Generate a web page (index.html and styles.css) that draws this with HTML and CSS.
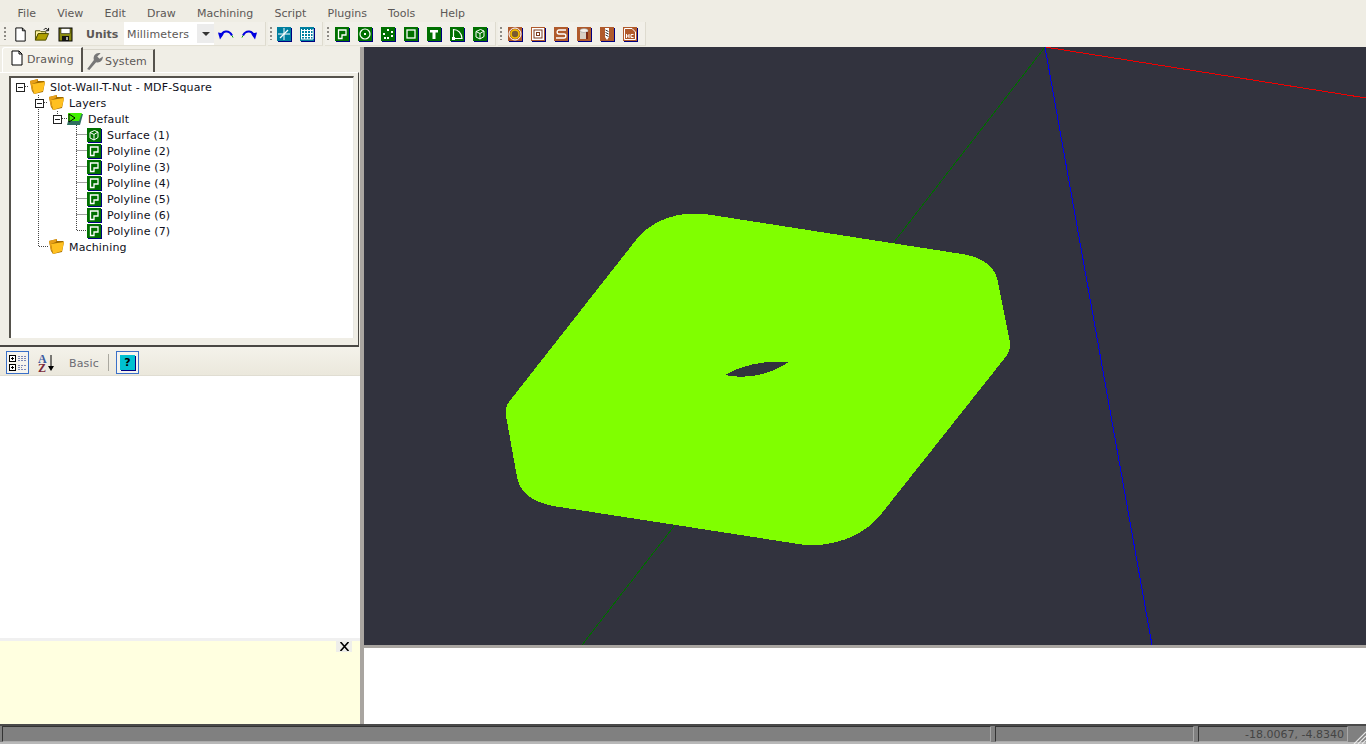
FILE: index.html
```html
<!DOCTYPE html>
<html lang="en">
<head>
<meta charset="utf-8">
<title>HeeksCAD</title>
<link rel="stylesheet" href="styles.css">
</head>
<body>
<svg class="defs" width="0" height="0" aria-hidden="true">
  <defs>
    <symbol id="i-poly" viewBox="0 0 15 15"><rect x="1" y="1" width="14" height="14" fill="#000080"/><rect width="14" height="14" fill="#007000"/><path d="M3.5 3H11V8H7V11.500H3.500Z" fill="none" stroke="#fff" stroke-width="1.300"/></symbol>
    <symbol id="i-circle" viewBox="0 0 15 15"><rect x="1" y="1" width="14" height="14" fill="#000080"/><rect width="14" height="14" fill="#007000"/><circle cx="7" cy="7" r="5" fill="none" stroke="#fff" stroke-width="1.200"/><rect x="6" y="6" width="2" height="2" fill="#fff"/></symbol>
    <symbol id="i-points" viewBox="0 0 15 15"><rect x="1" y="1" width="14" height="14" fill="#000080"/><rect width="14" height="14" fill="#007000"/><g fill="#fff"><rect x="6" y="2" width="2" height="2"/><rect x="10" y="4" width="2" height="2"/><rect x="2" y="6" width="2" height="2"/><rect x="10" y="8" width="2" height="2"/><rect x="6" y="10" width="2" height="2"/><rect x="3" y="10" width="2" height="2"/></g></symbol>
    <symbol id="i-rect" viewBox="0 0 15 15"><rect x="1" y="1" width="14" height="14" fill="#000080"/><rect width="14" height="14" fill="#007000"/><rect x="3" y="3" width="8" height="8" fill="none" stroke="#fff" stroke-width="1.300"/></symbol>
    <symbol id="i-text" viewBox="0 0 15 15"><rect x="1" y="1" width="14" height="14" fill="#000080"/><rect width="14" height="14" fill="#007000"/><path d="M3 3H11V5.500H8.500V12H5.500V5.500H3Z" fill="#fff"/></symbol>
    <symbol id="i-arc" viewBox="0 0 15 15"><rect x="1" y="1" width="14" height="14" fill="#000080"/><rect width="14" height="14" fill="#007000"/><path d="M3.500 11.500V2.500C8 2.500 11.500 6 12 11.500Z" fill="none" stroke="#fff" stroke-width="1.200"/><rect x="2" y="10" width="3" height="3" fill="#fff"/></symbol>
    <symbol id="i-solid" viewBox="0 0 15 15"><rect x="1" y="1" width="14" height="14" fill="#000080"/><rect width="14" height="14" fill="#007000"/><path d="M3 4.500L7.500 2.500L11 4V9.500L7 12L3 10ZM3 4.500L7 6.500L11 4M7 6.500V12" fill="none" stroke="#fff"/></symbol>
    <symbol id="i-m1" viewBox="0 0 15 15"><rect x="1" y="1" width="14" height="14" fill="#000080"/><rect width="14" height="14" fill="#b05a2c"/><circle cx="7" cy="7" r="6" fill="none" stroke="#fff" stroke-width="1"/><circle cx="7" cy="7" r="4" fill="#7a5a30" stroke="#f2c400" stroke-width="1.600"/></symbol>
    <symbol id="i-m2" viewBox="0 0 15 15"><rect x="1" y="1" width="14" height="14" fill="#000080"/><rect width="14" height="14" fill="#b05a2c"/><rect x="1" y="1" width="12" height="12" fill="#fff"/><rect x="2.500" y="2.500" width="9" height="9" fill="#7a3a1e"/><rect x="3.500" y="3.500" width="7" height="7" fill="#fff"/><rect x="5" y="5" width="4" height="4" fill="#7a3a1e"/><rect x="6" y="6" width="2" height="2" fill="#fff"/></symbol>
    <symbol id="i-m3" viewBox="0 0 15 15"><rect x="1" y="1" width="14" height="14" fill="#000080"/><rect width="14" height="14" fill="#b05a2c"/><path d="M12 3H5C2.500 3 2.500 7 5 7H10C12.500 7 12.500 11 10 11H2" fill="none" stroke="#fff" stroke-width="1.300"/></symbol>
    <symbol id="i-m4" viewBox="0 0 15 15"><rect x="1" y="1" width="14" height="14" fill="#000080"/><rect width="14" height="14" fill="#b05a2c"/><rect x="3" y="3" width="8" height="9" fill="#d8cfc4"/><ellipse cx="7" cy="3.500" rx="4" ry="2" fill="#f4f0ea" stroke="#888" stroke-width=".5"/><rect x="9" y="5" width="2" height="7" fill="#7a2a16"/></symbol>
    <symbol id="i-m5" viewBox="0 0 15 15"><rect x="1" y="1" width="14" height="14" fill="#000080"/><rect width="14" height="14" fill="#b05a2c"/><path d="M5 1H9V10L7 13L5 10Z" fill="#fff"/><path d="M5.500 3L8.500 4.500M5.500 5.500L8.500 7M5.500 8L8.500 9.500" stroke="#333" fill="none"/></symbol>
    <symbol id="i-m6" viewBox="0 0 15 15"><rect x="1" y="1" width="14" height="14" fill="#000080"/><rect width="14" height="14" fill="#b05a2c"/><path d="M1.500 1.500H9L12.500 5V12.500H1.500Z" fill="none" stroke="#fff"/><path d="M3.500 7V11M6 7V11M3.500 9H6M10.500 7.500H8V10.500H10.500" fill="none" stroke="#fff"/></symbol>
    <symbol id="i-folder" viewBox="0 0 16 16"><path d="M1 2L9 0V2H15L16 3L14 13L5 15L3 12Z" fill="#a06a00"/><path d="M3 5L16 3L14 12L5 15Z" fill="#ffc020"/><path d="M1 2L9 0L8 3L3 5L4 11L3 12Z" fill="#e8a018"/></symbol>
    <symbol id="i-page" viewBox="0 0 14 16"><path d="M2 1H9L12 4V15H2Z" fill="#fff" stroke="#000"/><path d="M9 1V4H12" fill="none" stroke="#000"/></symbol>
  </defs>
</svg>

<div class="app">
  <nav class="menubar">
    <span class="menu-item">File</span><span class="menu-item">View</span><span class="menu-item">Edit</span><span class="menu-item">Draw</span><span class="menu-item">Machining</span><span class="menu-item">Script</span><span class="menu-item">Plugins</span><span class="menu-item">Tools</span><span class="menu-item">Help</span>
  </nav>

  <div class="toolbars">
    <div class="toolbar tb-file">
      <i class="grip"></i>
      <svg class="ticon tnew" viewBox="0 0 14 16"><use href="#i-page"/></svg>
      <svg class="ticon topen" viewBox="0 0 16 16"><path d="M1 4H6L7 5H12V7H4L1 14Z" fill="#fff3a0" stroke="#4a4a00"/><path d="M1 14L4 7H15L12 14Z" fill="#b0a000" stroke="#4a4a00"/><path d="M10 3C11 1 13 1 14 3" fill="none" stroke="#000"/><path d="M15 1V4H12" fill="none" stroke="#000"/></svg>
      <svg class="ticon" viewBox="0 0 15 15"><rect x="1" y="1" width="13" height="13" fill="#8a8a10" stroke="#000"/><rect x="3" y="1.500" width="9" height="5" fill="#fff" stroke="#000" stroke-width=".5"/><rect x="4" y="9" width="7" height="5" fill="#111"/><rect x="8" y="10" width="2" height="3" fill="#aaa"/></svg>
      <span class="units-label">Units</span>
      <div class="combo"><span class="combo-text">Millimeters</span><span class="combo-btn"><i class="combo-arrow"></i></span></div>
      <svg class="ticon narrow" viewBox="0 0 16 14"><path d="M3 9C4 3 11 2 14 8" fill="none" stroke="#0000e0" stroke-width="2"/><path d="M0 5L6 6L2 12Z" fill="#0000e0"/><path d="M14 8l1 2" stroke="#00a000"/></svg>
      <svg class="ticon narrow" viewBox="0 0 16 14"><path d="M13 9C12 3 5 2 2 8" fill="none" stroke="#0000e0" stroke-width="2"/><path d="M16 5L10 6L14 12Z" fill="#0000e0"/><path d="M2 8l-1 2" stroke="#00a000"/></svg>
    </div>
    <div class="toolbar tb-view">
      <i class="grip"></i>
      <svg class="ticon" viewBox="0 0 15 15"><rect x="1" y="1" width="14" height="14" fill="#000080"/><rect width="14" height="14" fill="#007f9f"/><path d="M7 1V13M1 7H13" stroke="#fff"/><path d="M3 11L11 3" stroke="#fff" stroke-width="1.200"/></svg>
      <svg class="ticon" viewBox="0 0 15 15"><rect x="1" y="1" width="14" height="14" fill="#000080"/><rect width="14" height="14" fill="#007f9f"/><path d="M1.500 2V12M4.500 2V12M7.500 2V12M10.500 2V12M13 2V12M1 3.500H13M1 6.500H13M1 9.500H13M1 12H13" stroke="#fff"/></svg>
    </div>
    <div class="toolbar tb-draw">
      <i class="grip"></i>
      <svg class="ticon"><use href="#i-poly"/></svg>
      <svg class="ticon"><use href="#i-circle"/></svg>
      <svg class="ticon"><use href="#i-points"/></svg>
      <svg class="ticon"><use href="#i-rect"/></svg>
      <svg class="ticon"><use href="#i-text"/></svg>
      <svg class="ticon"><use href="#i-arc"/></svg>
      <svg class="ticon"><use href="#i-solid"/></svg>
    </div>
    <div class="toolbar tb-mach">
      <i class="grip"></i>
      <svg class="ticon"><use href="#i-m1"/></svg>
      <svg class="ticon"><use href="#i-m2"/></svg>
      <svg class="ticon"><use href="#i-m3"/></svg>
      <svg class="ticon"><use href="#i-m4"/></svg>
      <svg class="ticon"><use href="#i-m5"/></svg>
      <svg class="ticon"><use href="#i-m6"/></svg>
    </div>
  </div>

  <div class="workspace">
    <aside class="sidebar">
      <div class="tabs">
        <div class="tab tab-active">
          <svg class="tab-icon" viewBox="0 0 14 16"><use href="#i-page"/></svg>
          <span>Drawing</span>
        </div>
        <div class="tab tab-rest">
          <svg class="tab-icon" viewBox="0 0 16 16"><path d="M1 15L3 16L9 9C12 10 15 8 15 4L12 6L10 4L13 1C9 0 6 3 7 7Z" fill="#777"/></svg>
          <span>System</span>
        </div>
      </div>
      <div class="tree-wrap">
        <div class="tree">
          <svg class="tree-lines" width="345" height="262" aria-hidden="true">
            <path d="M29.500 19V170.500H39M35 26.500H39M48.500 35V46M53 42.500H58M67.500 49V154.500H78M67.500 58.500H78M67.500 74.500H78M67.500 90.500H78M67.500 106.500H78M67.500 122.500H78M67.500 138.500H78M16 10.500H20" fill="none" stroke="#444" stroke-dasharray="1 1"/>
          </svg>
          <div class="row d0"><i class="expander"></i><svg class="node"><use href="#i-folder"/></svg><span>Slot-Wall-T-Nut - MDF-Square</span></div>
          <div class="row d1"><i class="expander"></i><svg class="node"><use href="#i-folder"/></svg><span>Layers</span></div>
          <div class="row d2"><i class="expander"></i><svg class="node" viewBox="0 0 16 16"><path d="M3 3H16L13 14H0Z" fill="#2f6f5f"/><path d="M1 2H15L12 10H1Z" fill="#40f000"/><path d="M2 3L8 7L2 11Z" fill="#40f000" stroke="#000"/></svg><span>Default</span></div>
          <div class="row d3"><svg class="node"><use href="#i-solid"/></svg><span>Surface (1)</span></div>
          <div class="row d3"><svg class="node"><use href="#i-poly"/></svg><span>Polyline (2)</span></div>
          <div class="row d3"><svg class="node"><use href="#i-poly"/></svg><span>Polyline (3)</span></div>
          <div class="row d3"><svg class="node"><use href="#i-poly"/></svg><span>Polyline (4)</span></div>
          <div class="row d3"><svg class="node"><use href="#i-poly"/></svg><span>Polyline (5)</span></div>
          <div class="row d3"><svg class="node"><use href="#i-poly"/></svg><span>Polyline (6)</span></div>
          <div class="row d3"><svg class="node"><use href="#i-poly"/></svg><span>Polyline (7)</span></div>
          <div class="row d1 leaf"><svg class="node"><use href="#i-folder"/></svg><span>Machining</span></div>
        </div>
      </div>
      <div class="prop-bar">
        <div class="prop-btn">
          <svg width="20" height="20" viewBox="0 0 20 20"><g fill="#fff" stroke="#000"><rect x="1.500" y="2.500" width="6" height="6"/><rect x="1.500" y="11.500" width="6" height="6"/></g><path d="M3 5.500H6M4.500 4V7M3 14.500H6M4.500 13V16" stroke="#000"/><path d="M10 3.500H18M10 5.500H18M10 7.500H18M10 12.500H18M10 14.500H14M10 16.500H18" stroke="#7c88b8" stroke-dasharray="2 1"/></svg>
        </div>
        <div class="sort-icon">
          <span class="az-a">A</span><span class="az-z">Z</span>
          <svg class="sort-arrow" width="6" height="16" viewBox="0 0 6 16"><path d="M3 0V13" stroke="#000"/><path d="M0 11H6L3 16Z"/></svg>
        </div>
        <span class="basic">Basic</span>
        <i class="prop-sep"></i>
        <div class="prop-btn help"><span class="help-q">?</span></div>
      </div>
      <div class="prop-list"></div>
      <div class="help-pane"><span class="close-x"><svg width="11" height="9" viewBox="0 0 11 9"><path d="M1.500 0L9.500 9M9.500 0L1.500 9" stroke="#000" stroke-width="1.600"/></svg></span></div>
    </aside>

    <main class="main">
      <svg class="view" viewBox="364 47 1002 598" preserveAspectRatio="none">
        <rect x="364" y="47" width="1002" height="598" fill="#32333e"/>
        <g class="crisp">
          <path d="M1045 47L582 645" stroke="#006a00" fill="none"/>
          <path d="M1045 47L1366 98" stroke="#f00000" fill="none"/>
          <path d="M1045 47L1152 645" stroke="#0000f0" fill="none"/>
          <path d="M636 240C650 222 675 211 705 214L962 254C982 257 995 266 998 282L1010 343C1010 351 1008 354 1004 359L882 513C868 532 840 547 805 545L553 506C533 502 520 493 517 477L506 416C505 408 507 403 512 398Z" fill="#80ff00"/>
          <path d="M725 375C742 365 765 360 789 362C778 369 767 374 752 376C742 377 733 377 725 375Z" fill="#32333e"/>
        </g>
      </svg>
      <div class="console"></div>
    </main>
  </div>

  <footer class="statusbar">
    <div class="field f-main"></div>
    <div class="field f-mid"></div>
    <div class="field f-coords">-18.0067, -4.8340</div>
    <svg class="resize-grip" width="13" height="13" viewBox="0 0 13 13"><path d="M13 1L1 13M13 5L5 13M13 9L9 13" stroke="#e8e8e8" stroke-width="1.200"/></svg>
  </footer>
</div>
</body>
</html>
```
FILE: styles.css
```css
* { box-sizing: border-box; }
html, body { margin: 0; padding: 0; }
body { width: 1366px; height: 744px; overflow: hidden; font-family: "DejaVu Sans", sans-serif; font-size: 11px; letter-spacing: .15px; color: #000; background: #efede4; }
.defs { display: block; height: 0; }
.app { display: flex; flex-direction: column; height: 744px; }

.menubar { display: flex; height: 22px; padding-left: 7px; align-items: center; background: #efede4; color: #5c5856; flex: none; padding-top: 5px; letter-spacing: 0; }
.menu-item { padding: 0 10.6px; line-height: 16px; }
.menu-item:last-child { margin-left: 3.500px; }

.toolbars { display: flex; height: 25px; flex: none; background: #efede4; }
.toolbar { display: flex; align-items: center; height: 24px; padding: 2px 0 0 13px; background: #f2f0e9; position: relative; border-right: 1px solid #dedbcf; border-bottom: 1px solid #e3e0d4; }
.grip { position: absolute; left: 2px; top: 5px; width: 2px; height: 13px; background: repeating-linear-gradient(to bottom, #8d8a84 0 2px, transparent 2px 4px); }
.ticon { width: 15px; height: 15px; flex: none; margin-right: 8px; }
.tnew { margin-right: 6px; }
.topen { width: 16px; }
.tb-file { width: 266px; }
.tb-file .grip { left: 4px; }
.tb-view { width: 55px; padding-left: 9px; margin-left: 2px; }
.tb-draw { width: 171px; padding-left: 10px; margin-left: 2px; }
.tb-mach { width: 148px; padding-left: 10px; margin-left: 2px; }
.units-label { font-weight: 700; color: #5c5856; margin: 0 5px 0 5px; width: 33px; letter-spacing: 0; }
.combo { width: 90px; height: 23px; background: #fff; display: flex; align-items: center; justify-content: space-between; margin: -2px 4px 0 0; align-self: flex-start; }
.combo-text { padding: 1px 0 0 3px; color: #5c5856; }
.combo-btn { width: 17px; height: 19px; background: #ececec; display: flex; align-items: center; justify-content: center; margin-right: 0; }
.combo-arrow { width: 0; height: 0; border: 4px solid transparent; border-top: 4px solid #333; border-bottom: 0; }
.ticon.narrow { width: 16px; margin-right: 7px; }

.workspace { flex: 1; display: flex; min-height: 0; background: #a9a5a0; }
.sidebar { width: 360px; flex: none; display: flex; flex-direction: column; background: #f0eee6; }
.tabs { display: flex; height: 25px; flex: none; padding-left: 2px; }
.tab { display: flex; align-items: center; color: #5c5856; }
.tab-active { width: 81px; height: 25px; padding: 0 0 1px 6px; background: #f4f2ea; border-radius: 3px 0 0 0; border-top: 1px solid #fff; border-left: 1px solid #fff; border-right: 2px solid #55524c; }
.tab-active .tab-icon { margin-top: -4px; }
.tab-rest { width: 72px; height: 23px; padding: 1px 0 0 3px; margin-top: 2px; border-top: 1px solid #d8d5ca; border-right: 2px solid #55524c; }
.tab-icon { width: 16px; height: 16px; margin-right: 2px; flex: none; }
.tab-rest .tab-icon { width: 18px; height: 18px; margin-right: 1px; margin-top: -1px; }
.tree-wrap { height: 275px; width: 359px; flex: none; padding: 3px 4px 7px 9px; border-top: 1px solid #fff; border-right: 1px solid #4a4844; border-bottom: 2px solid #4a4844; }
.tree { height: 262px; background: #fff; position: relative; border-top: 2px solid #55524c; border-left: 2px solid #55524c; border-right: 1px solid #e8e8e4; padding-top: 1px; }
.tree-lines { position: absolute; left: -2px; top: -2px; }
.row { height: 16px; display: flex; align-items: center; color: #101020; position: relative; }
.row span { line-height: 16px; padding-top: 1px; }
.node { width: 16px; height: 16px; flex: none; margin-right: 5px; }
.expander { width: 9px; height: 9px; flex: none; border: 1px solid #222; background: linear-gradient(#222, #222) center / 5px 1px no-repeat, #fff; margin-right: 4px; margin-top: 1px; }
.d0 { padding-left: 5px; }
.d1 { padding-left: 24px; }
.d1.leaf { padding-left: 37px; }
.d2 { padding-left: 42px; }
.d2 .node { margin-left: 1px; }
.d3 { padding-left: 76px; }
.d3 .node { width: 15px; height: 15px; }

.prop-bar { height: 29px; flex: none; display: flex; align-items: center; padding: 3px 0 0 6px; background: linear-gradient(#f4f2ea, #ebe8dc); border-bottom: 1px solid #e0ddd2; }
.prop-btn { width: 23px; height: 23px; flex: none; border: 1px solid #3a70c8; display: flex; align-items: center; justify-content: center; background: #f6f4ee; }
.sort-icon { width: 20px; height: 22px; margin-left: 9px; position: relative; font-family: "Liberation Serif", serif; font-size: 12px; line-height: 9px; display: flex; flex-direction: column; padding-top: 3px; }
.az-a { color: #3a5aa0; font-weight: 700; }
.az-z { color: #7a2a3a; font-weight: 700; }
.sort-arrow { position: absolute; left: 10px; top: 3px; }
.basic { margin-left: 11px; color: #6c6c74; width: 39px; padding-top: 1px; }
.prop-sep { width: 1px; height: 17px; background: #aaa89f; flex: none; }
.help { margin-left: 7px; }
.help-q { width: 15px; height: 15px; background: #00c0d0; box-shadow: 1px 1px 0 #000080; font-weight: 700; font-size: 11px; text-align: center; line-height: 15px; }
.prop-list { height: 265px; flex: none; background: #fff; border-bottom: 3px solid #f0f0f0; }
.help-pane { flex: 1; background: #ffffe0; display: flex; justify-content: flex-end; align-items: flex-start; padding-right: 8px; }
.close-x { width: 16px; height: 11px; background: #eeeeea; display: flex; align-items: center; justify-content: center; }

.main { flex: 1; display: flex; flex-direction: column; margin-left: 4px; background: #a9a5a0; min-width: 0; }
.view { display: block; width: 1002px; height: 598px; flex: none; }
.crisp { shape-rendering: crispEdges; }
.console { flex: 1; background: #fff; margin-top: 3px; }

.statusbar { height: 20px; flex: none; display: flex; background: #808080; border-top: 2px solid #4a4a4a; border-bottom: 2px solid #b8b8b8; padding: 0 0 0 2px; position: relative; gap: 4px; }
.field { height: 16px; flex: none; border-top: 1px solid #333; border-left: 1px solid #333; border-right: 1px solid #aaa; border-bottom: 1px solid #aaa; color: #444; line-height: 15px; text-align: right; padding-right: 3px; letter-spacing: 0; }
.f-main { width: 989px; }
.f-mid { width: 199px; }
.f-coords { width: 150px; }
.resize-grip { position: absolute; right: 0; bottom: -2px; }
```
